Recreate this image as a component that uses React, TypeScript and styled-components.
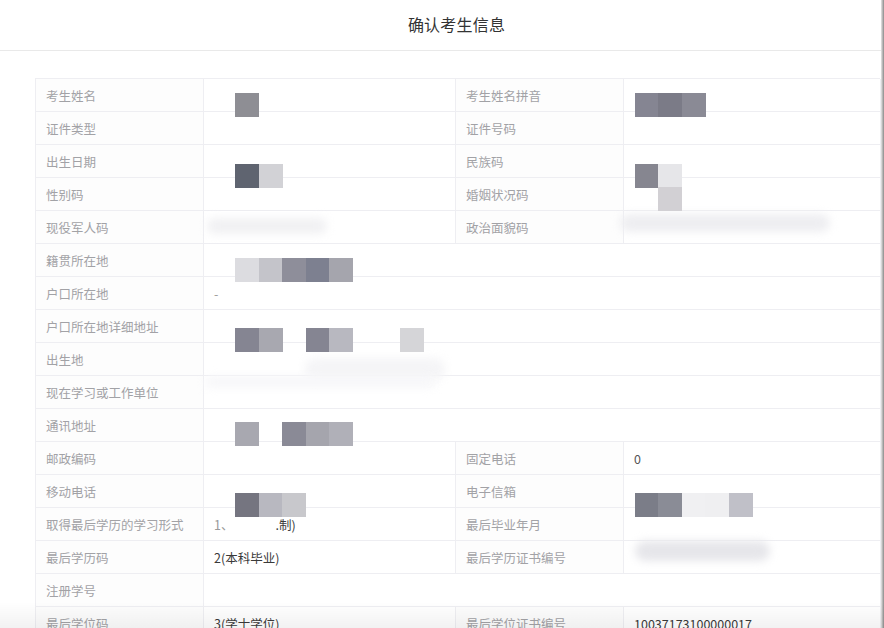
import React from "react";
import styled, { createGlobalStyle } from "styled-components";

const GlobalStyle = createGlobalStyle`
  html, body { margin: 0; padding: 0; background: #ffffff; }
  body { font-family: "Noto Sans CJK SC", "Noto Sans", sans-serif; }
  * { box-sizing: border-box; }
`;

const Page = styled.div`
  width: 884px;
  height: 628px;
  overflow: hidden;
  display: flex;
  background: #ffffff;
  position: relative;
`;

const Main = styled.div`
  flex: 1;
  display: flex;
  flex-direction: column;
  min-width: 0;
`;

const RightEdge = styled.div`
  width: 3px;
  background: linear-gradient(to right, #e6e6e6, #8a8a8a);
`;

const Header = styled.header`
  height: 51px;
  flex-shrink: 0;
  display: flex;
  align-items: center;
  justify-content: center;
  border-bottom: 1px solid #e9e9e9;
  padding-left: 32px;
  padding-bottom: 2px;
`;

const Title = styled.h1`
  margin: 0;
  font-size: 16px;
  font-weight: 400;
  color: #333333;
  letter-spacing: 0.2px;
`;

const Body = styled.div`
  padding: 27px 2px 0 35px;
`;

const TableWrap = styled.div`
  position: relative;
  width: 845px;
`;

const Table = styled.div`
  display: grid;
  grid-template-columns: 168px 252px 168px 257px;
  grid-auto-rows: 33px;
  border-top: 1px solid #eeeef2;
  border-left: 1px solid #eeeef2;
`;

const Cell = styled.div<{ $label?: boolean; $span?: number }>`
  grid-column: span ${(p) => p.$span ?? 1};
  display: flex;
  align-items: center;
  padding-left: 10px;
  border-right: 1px solid #eeeef2;
  border-bottom: 1px solid #eeeef2;
  font-size: 12.5px;
  color: ${(p) => (p.$label ? "#a2a2a6" : "#3a3a3a")};
  background: ${(p) => (p.$label ? "#fdfdfd" : "#ffffff")};
  white-space: nowrap;
  overflow: hidden;
`;

const Gap = styled.span<{ $w: number }>`
  display: inline-block;
  width: ${(p) => p.$w}px;
`;

const Faint = styled.span<{ $tone?: string }>`
  color: ${(p) => p.$tone ?? "#9a9a9a"};
`;

const Overlay = styled.div`
  position: absolute;
  inset: 0;
  pointer-events: none;
`;

const Block = styled.div`
  position: absolute;
  width: 24px;
  height: 24px;
  filter: blur(0.4px);
`;

const Smudge = styled.div`
  position: absolute;
  border-radius: 10px;
  filter: blur(4px);
`;

const BottomShade = styled.div`
  position: absolute;
  left: 0;
  right: 0;
  bottom: 0;
  height: 26px;
  background: linear-gradient(to bottom, rgba(0, 0, 0, 0), rgba(0, 0, 0, 0.05));
  pointer-events: none;
`;

type Row =
  | { kind: "pair"; l1: string; v1?: React.ReactNode; l2: string; v2?: React.ReactNode }
  | { kind: "full"; l1: string; v1?: React.ReactNode };

const rows: Row[] = [
  { kind: "pair", l1: "考生姓名", l2: "考生姓名拼音" },
  { kind: "pair", l1: "证件类型", l2: "证件号码" },
  { kind: "pair", l1: "出生日期", l2: "民族码" },
  { kind: "pair", l1: "性别码", l2: "婚姻状况码" },
  { kind: "pair", l1: "现役军人码", l2: "政治面貌码" },
  { kind: "full", l1: "籍贯所在地" },
  { kind: "full", l1: "户口所在地", v1: <Faint>-</Faint> },
  { kind: "full", l1: "户口所在地详细地址" },
  { kind: "full", l1: "出生地" },
  { kind: "full", l1: "现在学习或工作单位" },
  { kind: "full", l1: "通讯地址" },
  { kind: "pair", l1: "邮政编码", l2: "固定电话", v2: <Faint $tone="#555555">0</Faint> },
  { kind: "pair", l1: "移动电话", l2: "电子信箱" },
  {
    kind: "pair",
    l1: "取得最后学历的学习形式",
    v1: (
      <>
        <Faint>1、</Faint>
        <Gap $w={42} />
        <span>.制)</span>
      </>
    ),
    l2: "最后毕业年月",
  },
  { kind: "pair", l1: "最后学历码", v1: "2(本科毕业)", l2: "最后学历证书编号" },
  { kind: "full", l1: "注册学号" },
  { kind: "pair", l1: "最后学位码", v1: "3(学士学位)", l2: "最后学位证书编号", v2: "10037173100000017" },
];

type B = { gx: number; gy: number; c: string };
const blocks: B[] = [
  { gx: 0, gy: 0, c: "#8e8e94" },
  { gx: 17, gy: 0, c: "#858592" },
  { gx: 18, gy: 0, c: "#7b7b87" },
  { gx: 19, gy: 0, c: "#8a8a95" },
  { gx: 0, gy: 3, c: "#5f6470" },
  { gx: 1, gy: 3, c: "#d2d2d6" },
  { gx: 17, gy: 3, c: "#868690" },
  { gx: 18, gy: 3, c: "#e6e6e9" },
  { gx: 18, gy: 4, c: "#d2d0d4" },
  { gx: 0, gy: 7, c: "#dcdce0" },
  { gx: 1, gy: 7, c: "#c4c4ca" },
  { gx: 2, gy: 7, c: "#8e8e9a" },
  { gx: 3, gy: 7, c: "#7d8090" },
  { gx: 4, gy: 7, c: "#a5a5ad" },
  { gx: 0, gy: 10, c: "#858592" },
  { gx: 1, gy: 10, c: "#a8a8b0" },
  { gx: 3, gy: 10, c: "#858592" },
  { gx: 4, gy: 10, c: "#b8b8c0" },
  { gx: 7, gy: 10, c: "#d5d5d8" },
  { gx: 0, gy: 14, c: "#a8a8b0" },
  { gx: 2, gy: 14, c: "#8a8a96" },
  { gx: 3, gy: 14, c: "#a5a5ad" },
  { gx: 4, gy: 14, c: "#b0b0b8" },
  { gx: 0, gy: 17, c: "#757580" },
  { gx: 1, gy: 17, c: "#b8b8c0" },
  { gx: 2, gy: 17, c: "#c8c8cc" },
  { gx: 17, gy: 17, c: "#7b7d88" },
  { gx: 18, gy: 17, c: "#8a8c96" },
  { gx: 19, gy: 17, c: "#f0f0f2" },
  { gx: 20, gy: 17, c: "#efeff1" },
  { gx: 21, gy: 17, c: "#c0c0c8" },
];

const smudges = [
  { x: 172, y: 140, w: 120, h: 16, c: "#f1f1f3" },
  { x: 585, y: 136, w: 210, h: 18, c: "#eeeef1" },
  { x: 600, y: 463, w: 135, h: 20, c: "#e6e6ea" },
  { x: 270, y: 280, w: 140, h: 22, c: "#f5f5f7" },
  { x: 170, y: 298, w: 230, h: 12, c: "#f7f7f9" },
];

export default function App() {
  return (
    <>
      <GlobalStyle />
      <Page>
        <Main>
          <Header>
            <Title>确认考生信息</Title>
          </Header>
          <Body>
            <TableWrap>
              <Table>
                {rows.map((r, i) =>
                  r.kind === "pair" ? (
                    <React.Fragment key={i}>
                      <Cell $label>{r.l1}</Cell>
                      <Cell>{r.v1}</Cell>
                      <Cell $label>{r.l2}</Cell>
                      <Cell>{r.v2}</Cell>
                    </React.Fragment>
                  ) : (
                    <React.Fragment key={i}>
                      <Cell $label>{r.l1}</Cell>
                      <Cell $span={3}>{r.v1}</Cell>
                    </React.Fragment>
                  )
                )}
              </Table>
              <Overlay>
                {smudges.map((s, i) => (
                  <Smudge
                    key={i}
                    style={{ left: s.x, top: s.y, width: s.w, height: s.h, background: s.c }}
                  />
                ))}
                {blocks.map((b, i) => (
                  <Block
                    key={i}
                    style={{ left: 200 + b.gx * 23.5, top: 15 + b.gy * 23.5, background: b.c }}
                  />
                ))}
              </Overlay>
            </TableWrap>
          </Body>
        </Main>
        <RightEdge />
        <BottomShade />
      </Page>
    </>
  );
}
